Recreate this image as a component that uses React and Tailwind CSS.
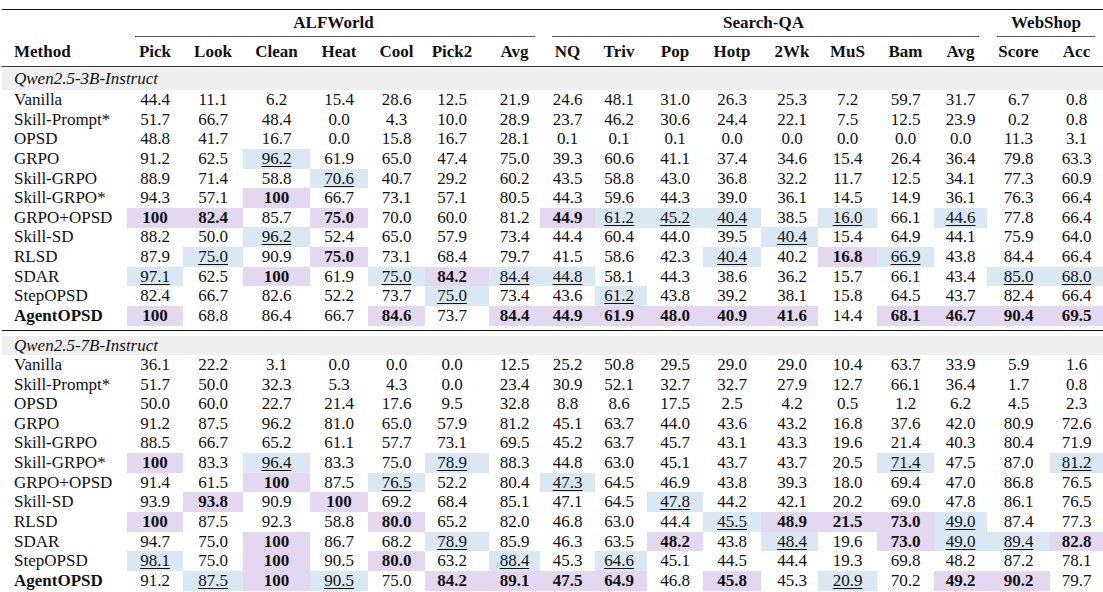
const GRID =
  "grid grid-cols-[125px_56px_60px_67px_58px_57px_64px_51px_55px_52px_56px_58px_57px_59px_57px_53px_63px_53px]";

// small nudges so the numbers sit where the reference prints them
const NUDGE = ["", "", "", "", "", "pr-[10px]", "", "", "pr-[4px]", "", "", "pl-[5px]", "", "", "", "", ""];

const HEADS = ["Pick", "Look", "Clean", "Heat", "Cool", "Pick2", "Avg", "NQ", "Triv", "Pop", "Hotp", "2Wk", "MuS", "Bam", "Avg", "Score", "Acc"];

// b = best (bold, purple), u = second (underline, blue)
const ROWS_3B = [
  ["Vanilla", "44.4 11.1 6.2 15.4 28.6 12.5 21.9 24.6 48.1 31.0 26.3 25.3 7.2 59.7 31.7 6.7 0.8"],
  ["Skill-Prompt*", "51.7 66.7 48.4 0.0 4.3 10.0 28.9 23.7 46.2 30.6 24.4 22.1 7.5 12.5 23.9 0.2 0.8"],
  ["OPSD", "48.8 41.7 16.7 0.0 15.8 16.7 28.1 0.1 0.1 0.1 0.0 0.0 0.0 0.0 0.0 11.3 3.1"],
  ["GRPO", "91.2 62.5 u96.2 61.9 65.0 47.4 75.0 39.3 60.6 41.1 37.4 34.6 15.4 26.4 36.4 79.8 63.3"],
  ["Skill-GRPO", "88.9 71.4 58.8 u70.6 40.7 29.2 60.2 43.5 58.8 43.0 36.8 32.2 11.7 12.5 34.1 77.3 60.9"],
  ["Skill-GRPO*", "94.3 57.1 b100 66.7 73.1 57.1 80.5 44.3 59.6 44.3 39.0 36.1 14.5 14.9 36.1 76.3 66.4"],
  ["GRPO+OPSD", "b100 b82.4 85.7 b75.0 70.0 60.0 81.2 b44.9 u61.2 u45.2 u40.4 38.5 u16.0 66.1 u44.6 77.8 66.4"],
  ["Skill-SD", "88.2 50.0 u96.2 52.4 65.0 57.9 73.4 44.4 60.4 44.0 39.5 u40.4 15.4 64.9 44.1 75.9 64.0"],
  ["RLSD", "87.9 u75.0 90.9 b75.0 73.1 68.4 79.7 41.5 58.6 42.3 u40.4 40.2 b16.8 u66.9 43.8 84.4 66.4"],
  ["SDAR", "u97.1 62.5 b100 61.9 u75.0 b84.2 u84.4 u44.8 58.1 44.3 38.6 36.2 15.7 66.1 43.4 u85.0 u68.0"],
  ["StepOPSD", "82.4 66.7 82.6 52.2 73.7 u75.0 73.4 43.6 u61.2 43.8 39.2 38.1 15.8 64.5 43.7 82.4 66.4"],
  ["AgentOPSD", "b100 68.8 86.4 66.7 b84.6 73.7 b84.4 b44.9 b61.9 b48.0 b40.9 b41.6 14.4 b68.1 b46.7 b90.4 b69.5", true],
];

const ROWS_7B = [
  ["Vanilla", "36.1 22.2 3.1 0.0 0.0 0.0 12.5 25.2 50.8 29.5 29.0 29.0 10.4 63.7 33.9 5.9 1.6"],
  ["Skill-Prompt*", "51.7 50.0 32.3 5.3 4.3 0.0 23.4 30.9 52.1 32.7 32.7 27.9 12.7 66.1 36.4 1.7 0.8"],
  ["OPSD", "50.0 60.0 22.7 21.4 17.6 9.5 32.8 8.8 8.6 17.5 2.5 4.2 0.5 1.2 6.2 4.5 2.3"],
  ["GRPO", "91.2 87.5 96.2 81.0 65.0 57.9 81.2 45.1 63.7 44.0 43.6 43.2 16.8 37.6 42.0 80.9 72.6"],
  ["Skill-GRPO", "88.5 66.7 65.2 61.1 57.7 73.1 69.5 45.2 63.7 45.7 43.1 43.3 19.6 21.4 40.3 80.4 71.9"],
  ["Skill-GRPO*", "b100 83.3 u96.4 83.3 75.0 u78.9 88.3 44.8 63.0 45.1 43.7 43.7 20.5 u71.4 47.5 87.0 u81.2"],
  ["GRPO+OPSD", "91.4 61.5 b100 87.5 u76.5 52.2 80.4 u47.3 64.5 46.9 43.8 39.3 18.0 69.4 47.0 86.8 76.5"],
  ["Skill-SD", "93.9 b93.8 90.9 b100 69.2 68.4 85.1 47.1 64.5 u47.8 44.2 42.1 20.2 69.0 47.8 86.1 76.5"],
  ["RLSD", "b100 87.5 92.3 58.8 b80.0 65.2 82.0 46.8 63.0 44.4 u45.5 b48.9 b21.5 b73.0 u49.0 87.4 77.3"],
  ["SDAR", "94.7 75.0 b100 86.7 68.2 u78.9 85.9 46.3 63.5 b48.2 43.8 u48.4 19.6 b73.0 u49.0 u89.4 b82.8"],
  ["StepOPSD", "u98.1 75.0 b100 90.5 b80.0 63.2 u88.4 45.3 u64.6 45.1 44.5 44.4 19.3 69.8 48.2 87.2 78.1"],
  ["AgentOPSD", "91.2 u87.5 b100 u90.5 75.0 b84.2 b89.1 b47.5 b64.9 46.8 b45.8 45.3 u20.9 70.2 b49.2 b90.2 79.7", true],
];

function Cell({ v, i }) {
  if (v[0] === "b") {
    return <div className={`text-center font-bold bg-[#e3d8f0] ${NUDGE[i]}`}>{v.slice(1)}</div>;
  }
  if (v[0] === "u") {
    return (
      <div className={`text-center bg-[#d9e8f3] ${NUDGE[i]}`}>
        <span className="underline decoration-1 underline-offset-2">{v.slice(1)}</span>
      </div>
    );
  }
  return <div className={`text-center ${NUDGE[i]}`}>{v}</div>;
}

function Row({ name, vals, bold }) {
  return (
    <div className={`${GRID} h-[19.65px] leading-[19.65px]`}>
      <div className={`pl-3 whitespace-nowrap ${bold ? "font-bold" : ""}`}>{name}</div>
      {vals.split(" ").map((v, i) => (
        <Cell key={i} v={v} i={i} />
      ))}
    </div>
  );
}

export default function App() {
  return (
    <div className="bg-white w-[1103px] h-[592px] overflow-hidden">
      <div className="ml-[2px] w-[1101px] pt-[8.5px] [font-family:'Liberation_Serif',serif] text-[17px] text-[#111]">
        <div className="h-[1.5px] bg-[#111]" />

        <div className={`${GRID} h-[26px] items-center font-bold`}>
          <div className="col-start-2 col-span-7 text-center">ALFWorld</div>
          <div className="col-span-8 text-center">Search-QA</div>
          <div className="col-span-2 text-center pl-[2px]">WebShop</div>
        </div>

        <div className={`${GRID} h-px`}>
          <div className="col-start-2 col-span-7 ml-[8px] mr-[5px] bg-[#555]" />
          <div className="col-span-8 ml-[12px] mr-[8px] bg-[#555]" />
          <div className="col-span-2 ml-[10px] mr-[8px] bg-[#555]" />
        </div>

        <div className={`${GRID} h-[28.5px] items-center font-bold`}>
          <div className="pl-3">Method</div>
          {HEADS.map((h, i) => (
            <div key={i} className={`text-center ${NUDGE[i]}`}>
              {h}
            </div>
          ))}
        </div>

        <div className="h-px bg-[#333]" />

        <div className="mt-[1.5px] h-[22px] leading-[22px] bg-[#efefef] pl-3 italic">Qwen2.5-3B-Instruct</div>
        {ROWS_3B.map(([n, v, b]) => (
          <Row key={n} name={n} vals={v} bold={b} />
        ))}

        <div className="mt-[4.5px] h-[1.3px] bg-[#111]" />

        <div className="mt-[4.4px] h-[19px] leading-[19px] bg-[#efefef] pl-3 italic">Qwen2.5-7B-Instruct</div>
        {ROWS_7B.map(([n, v, b]) => (
          <Row key={n} name={n} vals={v} bold={b} />
        ))}
      </div>
    </div>
  );
}
